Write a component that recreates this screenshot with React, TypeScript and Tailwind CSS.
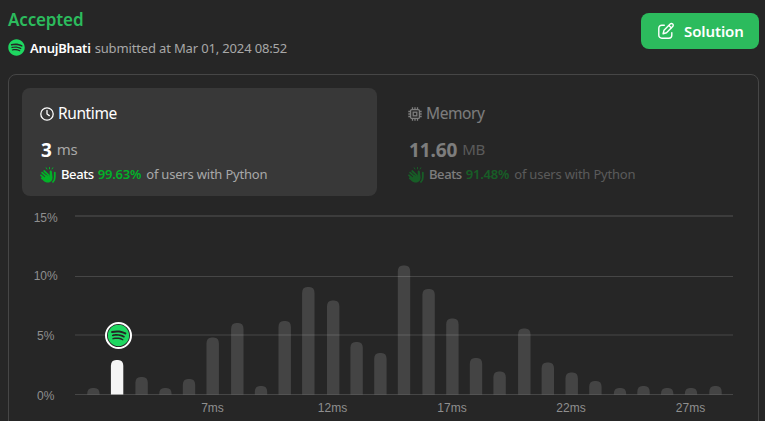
import type { ReactNode } from 'react';
import { FaSpotify } from 'react-icons/fa';

interface Bar {
  x: number;
  top: number;
}

interface StatCardProps {
  icon: ReactNode;
  title: string;
  value: string;
  unit: string;
  percent: string;
  active?: boolean;
}

const BASELINE = 194.5;

const bars: Bar[] = [
  { x: 93.4, top: 188 },
  { x: 117.1, top: 160 },
  { x: 141.6, top: 177 },
  { x: 165.4, top: 188 },
  { x: 189, top: 179 },
  { x: 212.7, top: 137.5 },
  { x: 237.3, top: 123 },
  { x: 261, top: 186 },
  { x: 284.7, top: 121 },
  { x: 308.3, top: 87 },
  { x: 333.2, top: 100.5 },
  { x: 356.6, top: 142 },
  { x: 380.4, top: 153 },
  { x: 404, top: 65.5 },
  { x: 428.6, top: 89 },
  { x: 452.4, top: 118.5 },
  { x: 476, top: 158 },
  { x: 499.6, top: 171.5 },
  { x: 524.3, top: 128.5 },
  { x: 547.8, top: 162.5 },
  { x: 571.7, top: 172.5 },
  { x: 595.4, top: 181 },
  { x: 620, top: 188 },
  { x: 643.5, top: 186 },
  { x: 667.2, top: 188 },
  { x: 691, top: 188 },
  { x: 715.5, top: 186 },
];

const gridLines = [
  { y: 15, height: 2, label: '15%', labelY: 21.5, color: '#3c3c3c' },
  { y: 76, height: 1, label: '10%', labelY: 80, color: '#464646' },
  { y: 134, height: 2, label: '5%', labelY: 140, color: '#363636' },
  { y: 194, height: 1, label: '0%', labelY: 200, color: '#464646' },
];

const ticks = [
  { x: 212.5, label: '7ms' },
  { x: 332.5, label: '12ms' },
  { x: 452, label: '17ms' },
  { x: 571, label: '22ms' },
  { x: 690.5, label: '27ms' },
];

function barPath({ x, top }: Bar) {
  const left = x - 6.2;
  const right = x + 6.2;
  const r = Math.min(6, BASELINE - top);
  return `M${left} ${BASELINE}V${top + r}Q${left} ${top} ${x - 1} ${top}H${x + 1}Q${right} ${top} ${right} ${top + r}V${BASELINE}Z`;
}

function ClockIcon() {
  return (
    <svg className="size-[14px]" viewBox="0 0 14 14" fill="none" stroke="currentColor" strokeWidth="1.3" strokeLinecap="round">
      <circle cx="7" cy="7" r="6.2" />
      <path d="M7 3.5V7l2.3 1.6" />
    </svg>
  );
}

function ChipIcon() {
  return (
    <svg className="size-[14px]" viewBox="0 0 14 14" fill="none" stroke="currentColor" strokeWidth="1.3">
      <rect x="2.6" y="2.6" width="8.8" height="8.8" rx="1.2" />
      <rect x="5.2" y="5.2" width="3.6" height="3.6" />
      <path d="M4.5 2.5V.3M7 2.5V.3M9.5 2.5V.3M4.5 13.7v-2.2M7 13.7v-2.2M9.5 13.7v-2.2M2.5 4.5H.3M2.5 7H.3M2.5 9.5H.3M13.7 4.5h-2.2M13.7 7h-2.2M13.7 9.5h-2.2" />
    </svg>
  );
}

function ClapIcon() {
  return (
    <svg className="mr-[5px] size-4 text-[#02b128]" viewBox="0 0 16 16" fill="none" stroke="currentColor" strokeLinecap="round">
      <path d="M6.2.8l.7 1.2M9.5.5v1.3M12.8.8l-.7 1.2" strokeWidth="1" />
      <path d="M4.2 4l4.8 4.6M2.1 5.6l5.4 4.9M1 8.3l5 4.2M1.8 11.2l3.9 2.8" strokeWidth="1.75" />
      <path
        d="M9.7 9.2V4.6c0-.9.7-1.4 1.3-1.1.6.2.9.9.9 1.6l.6 5c.3 3-1.5 5.5-4.5 5.5-2 0-3.6-.9-4.8-2.3L6 8z"
        fill="currentColor"
        stroke="none"
      />
      <path d="M14.8 5.6v4.6c0 2.2-.6 3.6-1.8 4.7" strokeWidth="1.8" />
    </svg>
  );
}

function EditIcon() {
  return (
    <svg
      className="mr-[9px] size-[18px]"
      viewBox="0 0 18 18"
      fill="none"
      stroke="currentColor"
      strokeWidth="1.4"
      strokeLinecap="round"
      strokeLinejoin="round"
    >
      <path d="M7.3 3.2H4.8a3 3 0 0 0-3 3v7a3 3 0 0 0 3 3h7a3 3 0 0 0 3-3v-2.6" />
      <path d="M13.2 2.1a1.75 1.75 0 0 1 2.5 2.5L9.5 10.8l-3.4.9.9-3.4zM12 3.5l2.4 2.4" />
    </svg>
  );
}

function StatCard({ icon, title, value, unit, percent, active }: StatCardProps) {
  return (
    <div className={`h-[108px] w-[355px] rounded-lg pt-[14px] pl-[18px] ${active ? 'bg-[#383838]' : ''}`}>
      <div className={active ? '' : 'opacity-40'}>
        <div className="flex h-6 items-center gap-1 text-[15.5px] tracking-[-0.4px] text-white">
          {icon}
          <span>{title}</span>
        </div>
        <div className="mt-3 flex h-6 items-center gap-[6px] pl-px">
          <span className="text-[19px] leading-6 font-bold tracking-[-0.1px] text-white">{value}</span>
          <span className="-ml-px pb-0.5 text-[15px] leading-[22px] tracking-[-0.4px] text-[#a8a8a8]">{unit}</span>
        </div>
        <div className="mt-[3px] flex h-5 items-center text-[13px] tracking-[-0.2px] whitespace-nowrap">
          <ClapIcon />
          <span className="mr-1 font-medium tracking-[-0.4px] text-white">Beats</span>
          <span className="mr-[5px] font-semibold text-[#02b128]">{percent}</span>
          <span className="text-[#a8a8a8]">of users with Python</span>
        </div>
      </div>
    </div>
  );
}

function RuntimeChart() {
  return (
    <svg
      className="-ml-[9px] block shrink-0 font-['Liberation_Sans',sans-serif]"
      width="765"
      height="221"
      viewBox="0 0 765 221"
    >
      {gridLines.map((line) => (
        <g key={line.label}>
          <rect x="75" y={line.y} width="658" height={line.height} fill={line.color} />
          <text x="45.7" y={line.labelY} textAnchor="middle" fontSize="12" fill="#8f8f8f">
            {line.label}
          </text>
        </g>
      ))}
      {bars.map((bar, index) => (
        <path
          key={index}
          d={barPath(bar)}
          fill={index === 1 ? '#f5f5f5' : '#ffffff'}
          fillOpacity={index === 1 ? 1 : 0.14}
        />
      ))}
      {ticks.map((tick) => (
        <text key={tick.label} x={tick.x} y="212" textAnchor="middle" fontSize="12" fill="#8f8f8f">
          {tick.label}
        </text>
      ))}
      <circle cx="118.5" cy="135.5" r="12.5" fill="#262626" stroke="#ffffff" strokeWidth="2" />
      <FaSpotify x="107.5" y="124.5" size={22} color="#1ed760" />
    </svg>
  );
}

function App() {
  return (
    <div className="flex h-[421px] w-[765px] flex-col overflow-hidden bg-[#262626] font-['Noto_Sans','Open_Sans',sans-serif]">
      <div className="flex h-[74px] shrink-0 justify-between pr-[6px] pl-2">
        <div className="pt-2">
          <h1 className="text-[17px] leading-6 font-semibold tracking-[-0.15px] text-[#2cbb5d]">Accepted</h1>
          <div className="mt-[7px] flex h-5 items-center text-[13px] tracking-[-0.15px] whitespace-nowrap">
            <FaSpotify className="relative -top-[2px] mr-[5px] size-[17px] text-[#1ed760]" />
            <span className="mr-1 font-semibold tracking-[-0.2px] text-white">AnujBhati</span>
            <span className="text-[#a8a8a8]">submitted at Mar 01, 2024 08:52</span>
          </div>
        </div>
        <button className="mt-[13px] flex h-9 w-[118px] items-center rounded-lg bg-[#2cbb5d] pl-4 text-[15px] font-semibold tracking-[-0.1px] text-white">
          <EditIcon />
          Solution
        </button>
      </div>
      <div className="ml-2 flex h-[400px] w-[751px] shrink-0 flex-col rounded-lg border border-[#464646]">
        <div className="flex h-[125px] shrink-0 gap-[13px] pt-[13px] pl-[13px]">
          <StatCard icon={<ClockIcon />} title="Runtime" value="3" unit="ms" percent="99.63%" active />
          <StatCard icon={<ChipIcon />} title="Memory" value="11.60" unit="MB" percent="91.48%" />
        </div>
        <RuntimeChart />
      </div>
    </div>
  );
}

export default App;
